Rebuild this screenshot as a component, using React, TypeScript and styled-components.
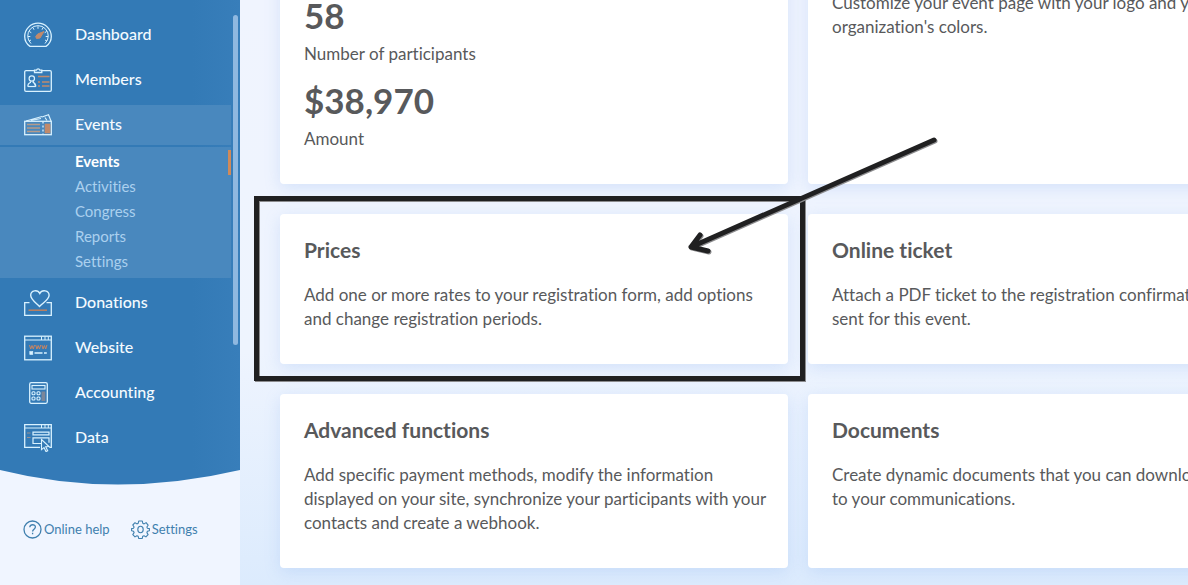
import React from "react";
import styled, { createGlobalStyle } from "styled-components";

const GlobalStyle = createGlobalStyle`
  * { box-sizing: border-box; }
  body {
    margin: 0;
    font-family: Lato, "Open Sans", sans-serif;
    font-size: 17px;
    line-height: 24px;
    font-variant-ligatures: none;
    color: #58595b;
    background: #f0f5ff;
  }
  h2, p, ul { margin: 0; padding: 0; }
  ul { list-style: none; }
  a { color: inherit; text-decoration: none; }
`;

const Page = styled.div`
  display: flex;
  height: 100vh;
  overflow: hidden;
`;

const Sidebar = styled.aside`
  position: relative;
  flex: 0 0 240px;
  background: #f0f5ff;
`;

const Nav = styled.nav`
  padding: 15px 9px 12px 0;
  background: linear-gradient(90deg, #337ab6 80%, #387eba);
`;

const MenuList = styled.ul`
  display: flex;
  flex-direction: column;
  gap: 5px;
`;

const MenuLink = styled.a<{ $active?: boolean }>`
  display: flex;
  align-items: center;
  gap: 23px;
  height: 40px;
  padding-left: 24px;
  font-size: 16px;
  font-weight: 500;
  color: #f4faff;
  background: ${(p) => (p.$active ? "#4988be" : "transparent")};

  svg { flex: none; }
`;

const MenuLabel = styled.span`
  padding-bottom: 2px;
`;

const SubMenu = styled.ul`
  margin-top: 2px;
  padding: 3px 0;
  background: #4988be;
`;

const SubLink = styled.a<{ $active?: boolean }>`
  display: block;
  height: 25px;
  padding-left: 75px;
  font-size: 15px;
  line-height: 22px;
  font-weight: ${(p) => (p.$active ? 700 : 400)};
  color: ${(p) => (p.$active ? "#ffffff" : "#abd0ee")};
  border-right: 3px solid ${(p) => (p.$active ? "#d08a5a" : "transparent")};
`;

const Curve = styled.svg`
  display: block;
  width: 100%;
  height: 15px;
`;

const ScrollThumb = styled.div`
  position: absolute;
  top: 15px;
  right: 2px;
  width: 5px;
  height: 330px;
  border-radius: 3px;
  background: #8fb8e0;
`;

const HelpLinks = styled.div`
  display: flex;
  gap: 21px;
  padding: 34px 23px;
`;

const HelpLink = styled.a`
  display: flex;
  align-items: center;
  gap: 2px;
  font-size: 13px;
  line-height: 20px;
  white-space: nowrap;
  color: #3f7fae;
`;

const Main = styled.main`
  flex: 1;
  min-width: 0;
  overflow: hidden;
  background: linear-gradient(180deg, #f0f4fe, #eef4fe 60%, #dcebfd);
`;

const CardGrid = styled.div`
  display: grid;
  grid-template-columns: repeat(2, minmax(508px, 1fr));
  gap: 30px 20px;
  margin-top: -33px;
  padding: 0 40px;
`;

const Card = styled.section`
  position: relative;
  padding: 24px 24px 33px;
  border-radius: 4px;
  background: #ffffff;
  box-shadow: 0 4px 16px rgba(120, 165, 235, 0.22);
`;

const CardTitle = styled.h2`
  margin-bottom: 21px;
  font-size: 21px;
  line-height: 24px;
  font-weight: 700;
`;

const Stat = styled.div`
  & + & { margin-top: 10px; }
`;

const StatValue = styled.p`
  margin-bottom: 3px;
  font-size: 35px;
  line-height: 48px;
  font-weight: 700;
`;

const Line = styled.span`
  display: block;
  white-space: nowrap;
`;

const Highlight = styled.div`
  position: absolute;
  z-index: 1;
  inset: -18px -17px -17px -26px;
  border: 5px solid #202021;
  filter: drop-shadow(1px 1px 0 #8c8c8e);
  pointer-events: none;
`;

const Arrow = styled.svg`
  position: absolute;
  z-index: 2;
  top: -84px;
  right: -162px;
  filter: drop-shadow(1px 1px 0 #8c8c8e);
  pointer-events: none;
`;

const LIGHT = "#d9f2ff";
const RUST = "#c08a6c";

const Icon = ({ children }: { children: React.ReactNode }) => (
  <svg width="28" height="28" viewBox="0 0 28 28" fill="none" stroke={LIGHT} strokeWidth="1.3" aria-hidden="true">
    {children}
  </svg>
);

const DashboardIcon = () => (
  <Icon>
    <path d="M6 25.4C2.6 23 .7 19.500 .7 15.500a13.300 13.300 0 0 1 26.600 0c0 4-1.900 7.500-5.300 9.900z" />
    <path d="M7 22.500a10.300 10.300 0 1 1 14 0" strokeWidth="1" />
    <path d="M14 5.300v2.500M9 6.700l1 2M19 6.700l-1 2M5.300 10.500l2 1.200M22.700 10.500l-2 1.200M4 15.500h2.300M24 15.500h-2.300M5 20l2-1M23 20l-2-1" strokeWidth="1" />
    <path d="M20 10.500l-4 6.500-3.500.5-.8-2 2-2.500z" fill={RUST} stroke={RUST} strokeWidth="1" />
  </Icon>
);

const MembersIcon = () => (
  <Icon>
    <path d="M10.500 4.700H2A1.300 1.300 0 0 0 .7 6v18A1.300 1.300 0 0 0 2 25.300h24a1.300 1.300 0 0 0 1.300-1.300V6A1.300 1.300 0 0 0 26 4.700h-8.500" />
    <path d="M10.500 6.500V4.200h2a1.700 1.700 0 0 1 3.300 0h2v2.300z" />
    <circle cx="7.800" cy="12.500" r="2.700" strokeWidth="1.200" />
    <path d="M3.800 20.500c0-2.500 1-3.500 2.600-4v-1.300M9.200 15.200v1.300c1.600.5 2.600 1.500 2.600 4z" strokeWidth="1.200" />
    <path d="M3.800 20.500h8" strokeWidth="1.200" />
    <path d="M14 10.500h11.500M14 16h2M18 16h7.500M14 20h2M18 20h7.500" stroke={RUST} strokeWidth="1.600" />
  </Icon>
);

const EventsIcon = () => (
  <Icon>
    <path d="M2 10L18 5.500M7 9.500l10-2M18 6l6.500-2.200L27 10M21 6.500l2 3" strokeWidth="1.200" />
    <rect x=".7" y="10.300" width="26.600" height="13.400" />
    <path d="M19 10.500v13" strokeDasharray="2 2" />
    <path d="M3 13.500h13M3 17h13M3 20.500h13" stroke="#b59a8a" strokeWidth="1.300" />
    <path d="M21 13h5v9h-5z" fill={RUST} stroke={RUST} strokeWidth=".6" />
  </Icon>
);

const DonationsIcon = () => (
  <Icon>
    <path d="M5.500 13.700H.7v12.600h26.600V13.700h-4.800" />
    <path d="M15.500 17.500C11.500 13.500 6.700 10.500 6.700 6.300c0-5.300 7-6 9.100-1.800 2-4.200 9.300-3.500 9.300 1.800 0 4.200-5.600 7.200-9.600 11.200z" strokeWidth="1.400" />
    <path d="M4.500 21.200h18.500" stroke="#bf805e" strokeWidth="1.500" />
  </Icon>
);

const WebsiteIcon = () => (
  <Icon>
    <rect x=".7" y="2.200" width="26.600" height="23.600" />
    <path d="M1 6h26M17.500 2.500V6M21 2.500V6M24.300 2.500V6" strokeWidth="1" />
    <path d="M5.500 11l1.200 4 1.300-3.500L9.300 15l1.200-4M11.700 11l1.200 4 1.300-3.500 1.300 3.500 1.200-4M17.900 11l1.200 4 1.300-3.500 1.300 3.500 1.200-4" stroke="#c78462" strokeWidth="1" />
    <rect x="5.800" y="17.500" width="3" height="3" fill={LIGHT} strokeWidth=".6" />
    <path d="M10.500 19h8M20 19h2.800" strokeWidth="1.600" />
  </Icon>
);

const AccountingIcon = () => (
  <Icon>
    <rect x="5.700" y="3.700" width="17.600" height="20.600" rx="1.500" />
    <path d="M17.500 12.500h3.800v9.500h-3.800z" fill="#7c8799" stroke="none" />
    <rect x="8" y="6.500" width="13" height="3.500" strokeWidth="1.100" />
    <rect x="8" y="12.700" width="3" height="3" rx="1" strokeWidth="1.100" />
    <rect x="13" y="12.700" width="3" height="3" rx="1" strokeWidth="1.100" />
    <rect x="8" y="18" width="3" height="3" rx="1" strokeWidth="1.100" />
    <rect x="13" y="18" width="3" height="3" rx="1" strokeWidth="1.100" />
  </Icon>
);

const DataIcon = () => (
  <Icon>
    <path d="M16 23.300H.7V.7h26.600v22.600h-2" />
    <path d="M1 4h26M17.500 1v3M21 1v3M24.300 1v3" strokeWidth="1" />
    <path d="M3 9h3.500M3 13.500h3.500" stroke="#9c8f90" strokeWidth="1.200" />
    <path d="M9 8.200h16v2.600H9zM17 19.500H9v-5.700h16v5" strokeWidth="1.200" />
    <path d="M17.500 15.500l7.500 7-3.300.3 2 4-1.700.8-2-4-2.500 2z" fill="#337ab6" strokeWidth="1.100" />
  </Icon>
);

const HelpIcon = () => (
  <svg width="19" height="19" viewBox="0 0 19 19" fill="none" stroke="#3f7fae" strokeWidth="1.300" aria-hidden="true">
    <circle cx="9.500" cy="9.500" r="8.500" />
    <path d="M6.800 7.300c0-3.500 5.600-3.300 5.600-.2 0 2-2.800 2.200-2.800 4.300M9.600 12.800v1.500" />
  </svg>
);

const GearIcon = () => (
  <svg width="19" height="19" viewBox="0 0 19 19" fill="none" stroke="#3f7fae" strokeWidth="1.100" strokeLinejoin="round" aria-hidden="true">
    <path d="M7.700 1h3.600l.5 2.300 1.300.6 2-1.300 2 2.600-1.200 1.800.5 1.200 2 .4v2.200l-2 .5-.5 1.300 1.200 2-2.200 2.300-1.900-1.200-1.300.6-.5 2.200H7.700l-.5-2.200-1.300-.6L4 16.900l-2.200-2.300 1.300-2-.6-1.300-1.900-.5V8.600l1.900-.4.6-1.200-1.300-2L4 2.700 5.900 3.900l1.300-.6z" />
    <ellipse cx="9.500" cy="9.500" rx="2.700" ry="3.200" />
  </svg>
);

const events = ["Events", "Activities", "Congress", "Reports", "Settings"];

const menu = [
  { label: "Dashboard", Glyph: DashboardIcon },
  { label: "Members", Glyph: MembersIcon },
  { label: "Events", Glyph: EventsIcon, children: events },
  { label: "Donations", Glyph: DonationsIcon },
  { label: "Website", Glyph: WebsiteIcon },
  { label: "Accounting", Glyph: AccountingIcon },
  { label: "Data", Glyph: DataIcon },
];

const stats = [
  { value: "58", label: "Number of participants" },
  { value: "$38,970", label: "Amount" },
];

const Lines = ({ text }: { text: string[] }) => (
  <p>
    {text.map((t) => (
      <Line key={t}>{t}</Line>
    ))}
  </p>
);

export default function App() {
  return (
    <Page>
      <GlobalStyle />
      <Sidebar>
        <Nav>
          <MenuList>
            {menu.map(({ label, Glyph, children }) => (
              <li key={label}>
                <MenuLink href="#" $active={!!children}>
                  <Glyph />
                  <MenuLabel>{label}</MenuLabel>
                </MenuLink>
                {children && (
                  <SubMenu>
                    {children.map((c, i) => (
                      <li key={c}>
                        <SubLink href="#" $active={i === 0}>{c}</SubLink>
                      </li>
                    ))}
                  </SubMenu>
                )}
              </li>
            ))}
          </MenuList>
        </Nav>
        <Curve viewBox="0 0 240 15" preserveAspectRatio="none" aria-hidden="true">
          <path d="M0 0Q116 29 240 0z" fill="#347ab7" />
        </Curve>
        <ScrollThumb />
        <HelpLinks>
          <HelpLink href="#"><HelpIcon />Online help</HelpLink>
          <HelpLink href="#"><GearIcon />Settings</HelpLink>
        </HelpLinks>
      </Sidebar>
      <Main>
        <CardGrid>
          <Card>
            {stats.map((s) => (
              <Stat key={s.label}>
                <StatValue>{s.value}</StatValue>
                <p>{s.label}</p>
              </Stat>
            ))}
          </Card>
          <Card>
            <Lines text={["Customize your event page with your logo and your", "organization's colors."]} />
          </Card>
          <Card>
            <CardTitle>Prices</CardTitle>
            <Lines text={["Add one or more rates to your registration form, add options", "and change registration periods."]} />
            <Highlight />
            <Arrow width="270" height="130" viewBox="0 0 270 130" fill="none" stroke="#202021" strokeWidth="5" strokeLinecap="round" strokeLinejoin="round" aria-hidden="true">
              <path d="M254 10L11 117M20 105L11 117l17 4" />
            </Arrow>
          </Card>
          <Card>
            <CardTitle>Online ticket</CardTitle>
            <Lines text={["Attach a PDF ticket to the registration confirmation email", "sent for this event."]} />
          </Card>
          <Card>
            <CardTitle>Advanced functions</CardTitle>
            <Lines text={["Add specific payment methods, modify the information", "displayed on your site, synchronize your participants with your", "contacts and create a webhook."]} />
          </Card>
          <Card>
            <CardTitle>Documents</CardTitle>
            <Lines text={["Create dynamic documents that you can download or attach", "to your communications."]} />
          </Card>
        </CardGrid>
      </Main>
    </Page>
  );
}
